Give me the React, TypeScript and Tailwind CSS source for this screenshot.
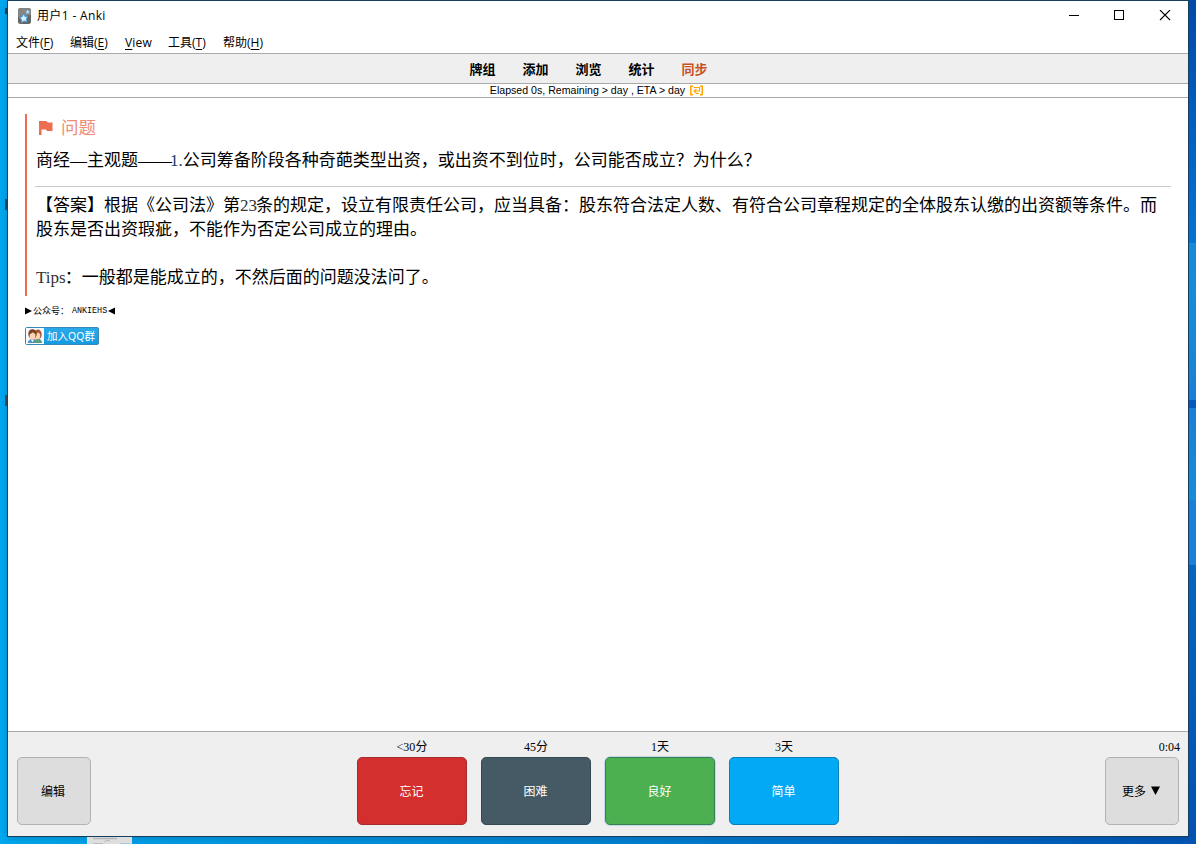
import type { ReactNode } from "react";

const menus = [
  { label: "文件", key: "F", width: "w-[54px]" },
  { label: "编辑", key: "E", width: "w-[55px]" },
  { label: "", key: "V", tail: "iew", width: "w-[43px]" },
  { label: "工具", key: "T", width: "w-[55px]" },
  { label: "帮助", key: "H", width: "w-[55px]" },
];

const links = ["牌组", "添加", "浏览", "统计", "同步"];

const answers = [
  { time: "<30", unit: "分", label: "忘记", style: "bg-[#d32f2f] border-[#a52b2f]" },
  { time: "45", unit: "分", label: "困难", style: "bg-[#455a64] border-[#354952]" },
  {
    time: "1",
    unit: "天",
    label: "良好",
    style: "bg-[#4caf50] border-[#378052] shadow-[0_0_0_1px_#c8d8ec]",
  },
  { time: "3", unit: "天", label: "简单", style: "bg-[#03a9f4] border-[#087fba]" },
];

function AnkiIcon() {
  return (
    <svg width="13" height="16" viewBox="0 0 13 16">
      <rect x="0" y="0" width="13" height="16" rx="2.5" fill="#666" />
      <path d="M2.500 0h8A2.500 2.500 0 0 1 13 2.500V7L0 9V2.500A2.500 2.500 0 0 1 2.500 0z" fill="#858585" />
      <path
        d="M5.500 6l1.400 2.500 2.800.2-1.600 2.300.8 2.800-2.800-.9-2.500 1.500v-2.900L1.400 9.700l2.700-.9z"
        fill="#d9f0ff"
        stroke="#4ba3e0"
        strokeWidth="1"
      />
      <path d="M9.400 1.800l.8 1.200 1.400 0-.8 1.200.4 1.400-1.400-.5-1.200.8V4.500L7.500 3.600l1.400-.4z" fill="#cfe9fb" stroke="#78b8e2" strokeWidth="0.500" />
    </svg>
  );
}

function WindowButtons() {
  return (
    <svg width="102" height="12" viewBox="0 0 102 12" fill="none" stroke="#000" shapeRendering="crispEdges">
      <path d="M0 5.500h10" />
      <rect x="45.500" y="0.500" width="9" height="9" />
      <path d="M91 0l10 10M101 0l-10 10" shapeRendering="auto" strokeWidth="1.100" />
    </svg>
  );
}

function SyncGlyph() {
  return (
    <svg className="ml-1" width="15" height="11" viewBox="0 0 15 11" fill="none" stroke="#ffa500">
      <path d="M4 1.250H1.750v8.500H4M11 1.250h2.250v8.500H11" strokeWidth="1.500" />
      <path d="M4.500 2.500h6v3.500H5M7.500 4L5 6l2.500 2.500H10" strokeWidth="1.100" />
    </svg>
  );
}

function QQBadge() {
  return (
    <div className="flex h-[18px] w-[74px] items-center rounded-[2px] border border-[#3689b7] bg-gradient-to-b from-[#29a9e8] to-[#159be1]">
      <svg width="18" height="16" viewBox="0 0 18 16">
        <rect width="18" height="16" fill="#f8fbfd" />
        <path d="M2 15c0-3 2-4 5-4s5 1 5 4z" fill="#4d91c6" />
        <path d="M8 15c0-3 2-4 4-4 3 0 4 2 4 4z" fill="#58a07b" />
        <ellipse cx="12" cy="6.500" rx="3.700" ry="5" fill="#ad5731" />
        <ellipse cx="11.800" cy="8" rx="2.400" ry="3.200" fill="#fad3b1" />
        <ellipse cx="6.500" cy="6" rx="4.200" ry="4.800" fill="#76381f" />
        <ellipse cx="6.500" cy="8" rx="3" ry="3.700" fill="#fbd5b4" />
        <path d="M3 6c2 0 3-1 4-2 1 1 2 2 3 2-1-4-6-5-7 0z" fill="#824423" />
        <path d="M5 12l1.500 2L8 12z" fill="#fff" />
      </svg>
      <span className="ml-[3px] whitespace-nowrap font-['Noto_Sans','Noto_Sans_CJK_SC',sans-serif] text-[10.500px] leading-4 text-white">
        加入QQ群
      </span>
    </div>
  );
}

function SideButton({ children }: { children: ReactNode }) {
  return (
    <button className="flex h-[68px] w-[74px] items-center justify-center rounded-[5px] border border-[#b2b2b2] bg-[#dddddd] pt-[2px] pr-[2px] text-[12px]">
      {children}
    </button>
  );
}

export default function App() {
  return (
    <div className="relative flex h-[844px] w-[1196px] overflow-hidden bg-gradient-to-r from-[#00a8ef] via-[#0083d2] to-[#0355b5] font-['Liberation_Sans','Noto_Sans_CJK_SC',sans-serif] text-black [text-spacing-trim:space-all]">
      <div className="flex w-[7px] shrink-0 flex-col items-end overflow-hidden bg-[#00a8ef]">
        <div className="mt-2 h-[6px] w-[2px] bg-[#17465b]" />
        <div className="mt-[185px] h-[11px] w-[2px] bg-[#17526e]" />
        <div className="mt-[185px] h-[11px] w-[2px] bg-[#3c5159]" />
      </div>

      <div className="flex h-[837px] w-[1182px] shrink-0 flex-col border border-[#153e61] bg-white shadow-[0_1px_7px_rgba(0,30,60,0.25)]">
        <div className="flex h-[29px] shrink-0 items-center pl-[10px]">
          <AnkiIcon />
          <span className="ml-[6px] font-['Open_Sans','Noto_Sans_CJK_SC',sans-serif] text-[12px] tracking-[0.350px]">用户1 - Anki</span>
          <div className="mr-[17px] ml-auto">
            <WindowButtons />
          </div>
        </div>

        <div className="flex h-[23px] shrink-0 items-center pt-[2px] pl-2 font-['Open_Sans','Noto_Sans_CJK_SC',sans-serif] text-[12px]">
          {menus.map((m) => (
            <div key={m.key} className={`shrink-0 whitespace-nowrap ${m.width}`}>
              {m.label}
              {m.label && <span>(<span className="underline underline-offset-2">{m.key}</span>)</span>}
              {!m.label && <span className="tracking-[0.200px]"><span className="underline underline-offset-2">{m.key}</span>{m.tail}</span>}
            </div>
          ))}
        </div>

        <div className="flex h-[31px] shrink-0 items-center justify-center gap-[27px] border-y border-[#aaaaaa] bg-[#efefef] pt-[2px] pr-[19px] text-[13px] font-bold">
          {links.map((l) => (
            <span key={l} className="last:text-[#c8501e]">{l}</span>
          ))}
        </div>

        <div className="flex h-[14px] shrink-0 items-center justify-center border-b border-[#aaaaaa] pr-[2px]">
          <span className="-translate-y-px whitespace-nowrap text-[10.600px] leading-3">Elapsed 0s, Remaining &gt; day , ETA &gt; day</span>
          <SyncGlyph />
        </div>

        <main className="min-h-0 grow px-[17px] pt-4 font-['Liberation_Serif','Noto_Sans_CJK_SC',serif]">
          <section className="h-[182px] border-l-2 border-[#ec6d51] pl-2">
            <div className="flex h-[28px] items-center text-[17.500px] text-[#ee8c78]">
              <svg className="-mt-px mr-2 ml-1" width="14" height="15" viewBox="0 0 14 15" fill="#ec6d51">
                <path d="M0 1h7.500l1 1.500H13.500V11H8L7 9.500H2.500V15H0z" />
              </svg>
              问题
            </div>
            <p className="h-[44px] pt-[7px] pl-px text-[17px] leading-6">
              商经—主观题——<span className="-ml-[2px] text-[#163a67]">1.</span>公司筹备阶段各种奇葩类型出资，或出资不到位时，公司能否成立？为什么？
            </p>
            <div className="border-t border-[#cccccc] pt-[7px] pl-px text-[17px] leading-6">
              <p>
                【答案】根据《公司法》第<span className="-mr-px text-[#333333]">23</span>条的规定，设立有限责任公司，应当具备：股东符合法定人数、有符合公司章程规定的全体股东认缴的出资额等条件。而
                <br />
                股东是否出资瑕疵，不能作为否定公司成立的理由。
              </p>
              <p className="mt-6">
                <span className="-mr-px text-[#333333]">Tips</span>：一般都是能成立的，不然后面的问题没法问了。
              </p>
            </div>
          </section>
          <div className="mt-[9px] flex h-3 items-center text-[9px]">
            <svg width="8" height="8" viewBox="0 0 8 8"><path d="M0 0.500L7 4L0 7.500z" /></svg>
            <span className="w-[39px] translate-y-px whitespace-nowrap">公众号：</span>
            <span className="inline-block w-[36px] origin-left translate-y-px scale-x-[0.930] font-['Liberation_Mono',monospace] text-[9px]">ANKIEHS</span>
            <svg width="7" height="8" viewBox="0 0 7 8"><path d="M7 0.500L0 4L7 7.500z" /></svg>
          </div>
          <div className="mt-[10px]"><QQBadge /></div>
        </main>

        <footer className="flex h-[105px] shrink-0 items-start justify-between border-t border-[#aaaaaa] bg-[#efefef] px-[9px] pt-[7px] font-['Liberation_Serif','Noto_Sans_CJK_SC',serif] text-[12px]">
          <div className="flex flex-col pt-[18px]">
            <SideButton>编辑</SideButton>
          </div>
          <div className="flex gap-[14px]">
            {answers.map((a) => (
              <div key={a.label} className="flex w-[110px] flex-col">
                <div className="h-[18px] text-center leading-4">{a.time}{a.unit}</div>
                <button className={`h-[68px] rounded-[5px] border pt-[2px] pr-px text-[12px] text-white ${a.style}`}>
                  {a.label}
                </button>
              </div>
            ))}
          </div>
          <div className="flex flex-col">
            <div className="-mr-px h-[18px] text-right leading-4">0:04</div>
            <SideButton>
              更多
              <svg className="-mt-[3px] ml-[5px]" width="9" height="9" viewBox="0 0 9 9"><path d="M0 0.500H9L4.500 9z" /></svg>
            </SideButton>
          </div>
        </footer>
      </div>

      <div className="flex w-[7px] shrink-0 flex-col bg-[#0452b1]">
        <div className="h-[243px] shrink-0 bg-gradient-to-b from-[#034aa8] to-[#0473d5]" />
        <div className="h-[157px] shrink-0 bg-gradient-to-b from-[#158ad7] via-[#168bd5] to-[#1b7ed5]" />
        <div className="h-2 shrink-0 bg-[#0558bd]" />
        <div className="h-[92px] shrink-0 bg-gradient-to-b from-[#1b7ed5] to-[#168dd5]" />
        <div className="h-[65px] shrink-0 bg-[#1b7fd5]" />
        <div className="h-[279px] shrink-0 bg-gradient-to-b from-[#0565bf] to-[#0452b1]" />
      </div>

      <div className="absolute top-[837px] left-[87px] flex h-[7px] w-[45px] justify-center overflow-hidden bg-[#dedede]">
        <svg width="41" height="7" viewBox="0 0 41 7">
          <path d="M4 1.500h24" stroke="#b4b4b4" strokeWidth="1.500" />
          <path d="M15 5q3-3 6-1M4 6.500h10" stroke="#bbbbbb" fill="none" />
          <path d="M31 6.500h10" stroke="#9cc7df" />
        </svg>
      </div>
    </div>
  );
}
